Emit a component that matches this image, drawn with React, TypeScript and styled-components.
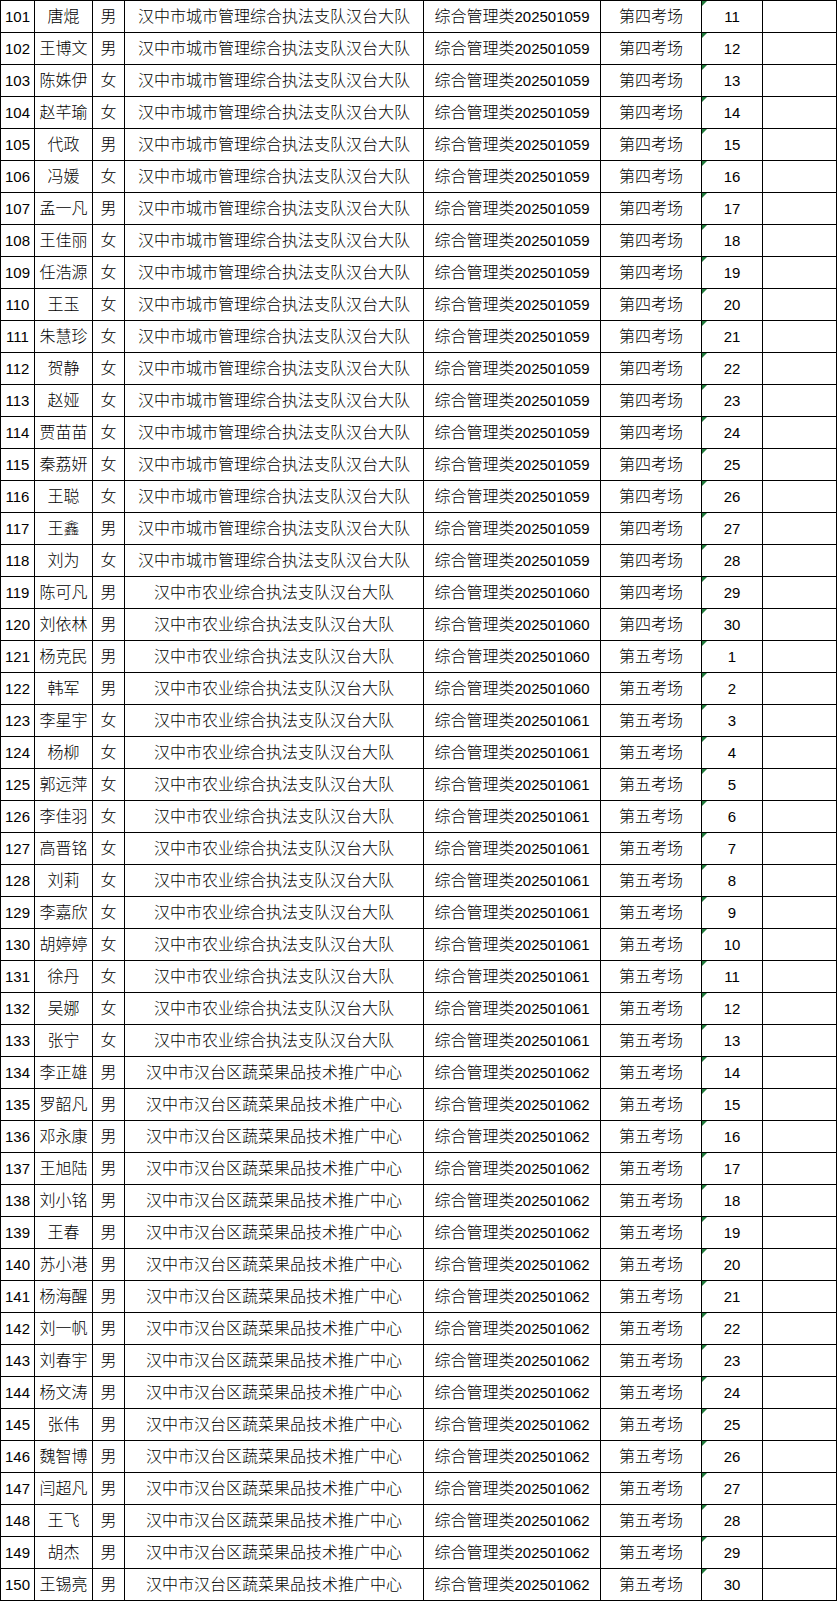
import styled, { createGlobalStyle } from "styled-components";

type Row = {
  no: number;
  name: string;
  sex: string;
  unit: string;
  code: string;
  room: string;
  seat: number;
};

const CITY = "汉中市城市管理综合执法支队汉台大队";
const FARM = "汉中市农业综合执法支队汉台大队";
const VEG = "汉中市汉台区蔬菜果品技术推广中心";

const people: [string, string][] = [
  ["唐焜", "男"], ["王博文", "男"], ["陈姝伊", "女"], ["赵芊瑜", "女"], ["代政", "男"],
  ["冯媛", "女"], ["孟一凡", "男"], ["王佳丽", "女"], ["任浩源", "女"], ["王玉", "女"],
  ["朱慧珍", "女"], ["贺静", "女"], ["赵娅", "女"], ["贾苗苗", "女"], ["秦荔妍", "女"],
  ["王聪", "女"], ["王鑫", "男"], ["刘为", "女"], ["陈可凡", "男"], ["刘依林", "男"],
  ["杨克民", "男"], ["韩军", "男"], ["李星宇", "女"], ["杨柳", "女"], ["郭远萍", "女"],
  ["李佳羽", "女"], ["高晋铭", "女"], ["刘莉", "女"], ["李嘉欣", "女"], ["胡婷婷", "女"],
  ["徐丹", "女"], ["吴娜", "女"], ["张宁", "女"], ["李正雄", "男"], ["罗韶凡", "男"],
  ["邓永康", "男"], ["王旭陆", "男"], ["刘小铭", "男"], ["王春", "男"], ["苏小港", "男"],
  ["杨海醒", "男"], ["刘一帆", "男"], ["刘春宇", "男"], ["杨文涛", "男"], ["张伟", "男"],
  ["魏智博", "男"], ["闫超凡", "男"], ["王飞", "男"], ["胡杰", "男"], ["王锡亮", "男"],
];

const rows: Row[] = people.map(([name, sex], i) => {
  const no = 101 + i;
  let unit = CITY;
  let code = "202501059";
  if (no >= 119 && no <= 122) {
    unit = FARM;
    code = "202501060";
  } else if (no >= 123 && no <= 133) {
    unit = FARM;
    code = "202501061";
  } else if (no >= 134) {
    unit = VEG;
    code = "202501062";
  }
  const room = no <= 120 ? "第四考场" : "第五考场";
  const seat = no <= 120 ? no - 90 : no - 120;
  return { no, name, sex, unit, code, room, seat };
});

const GlobalStyle = createGlobalStyle`
  html, body {
    margin: 0;
    padding: 0;
    background: #ffffff;
  }
  body {
    font-family: "Liberation Sans", "Noto Sans CJK SC", sans-serif;
    color: #000;
  }
`;

const Sheet = styled.div`
  display: grid;
  grid-template-columns: 34px 58px 32px 299px 177px 101px 61px 74px;
  grid-auto-rows: 32px;
  width: 837px;
  border-top: 1px solid #000;
  border-left: 1px solid #000;
  box-sizing: border-box;
`;

const Cell = styled.div<{ $flag?: boolean }>`
  position: relative;
  box-sizing: border-box;
  border-right: 1px solid #000;
  border-bottom: 1px solid #000;
  display: flex;
  align-items: center;
  justify-content: center;
  font-size: 16px;
  font-weight: 300;
  line-height: 31px;
  white-space: nowrap;
  overflow: hidden;

  ${(p) =>
    p.$flag &&
    `
    &::before {
      content: "";
      position: absolute;
      top: 0;
      left: 0;
      width: 0;
      height: 0;
      border-top: 5px solid #1f7a3a;
      border-right: 5px solid transparent;
    }
  `}
`;

const Num = styled.span`
  font-size: 15px;
  font-weight: 400;
`;

export default function App() {
  return (
    <>
      <GlobalStyle />
      <Sheet>
        {rows.map((r) => (
          <Row key={r.no} row={r} />
        ))}
      </Sheet>
    </>
  );
}

function Row({ row }: { row: Row }) {
  return (
    <>
      <Cell>
        <Num>{row.no}</Num>
      </Cell>
      <Cell>{row.name}</Cell>
      <Cell>{row.sex}</Cell>
      <Cell>{row.unit}</Cell>
      <Cell>
        综合管理类<Num>{row.code}</Num>
      </Cell>
      <Cell>{row.room}</Cell>
      <Cell $flag>
        <Num>{row.seat}</Num>
      </Cell>
      <Cell />
    </>
  );
}
